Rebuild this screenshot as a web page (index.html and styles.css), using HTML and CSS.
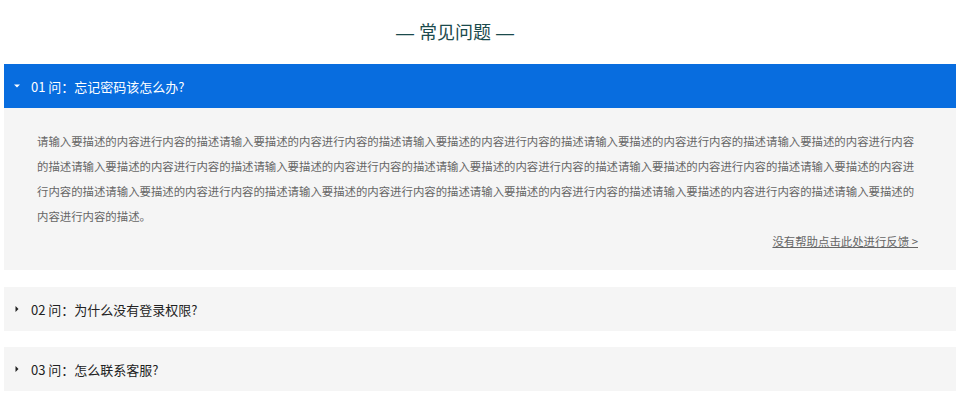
FILE: index.html
```html
<!DOCTYPE html>
<html lang="zh-CN">
<head>
    <meta charset="UTF-8">
    <meta name="viewport" content="width=device-width, initial-scale=1.0">
    <title>常见问题</title>
    <link rel="stylesheet" href="styles.css">
</head>
<body>
    <div class="faq">
        <h2 class="faq-title">— 常见问题 —</h2>

        <div class="faq-item open">
            <div class="faq-question">
                <svg class="caret" viewBox="0 0 6 6"><polygon points="0,1.5 6,1.5 3,4.5"/></svg>
                <span>01 问：忘记密码该怎么办?</span>
            </div>
            <div class="faq-answer">
                <p>请输入要描述的内容进行内容的描述请输入要描述的内容进行内容的描述请输入要描述的内容进行内容的描述请输入要描述的内容进行内容的描述请输入要描述的内容进行内容的描述请输入要描述的内容进行内容的描述请输入要描述的内容进行内容的描述请输入要描述的内容进行内容的描述请输入要描述的内容进行内容的描述请输入要描述的内容进行内容的描述请输入要描述的内容进行内容的描述请输入要描述的内容进行内容的描述请输入要描述的内容进行内容的描述请输入要描述的内容进行内容的描述请输入要描述的内容进行内容的描述。</p>
                <div class="feedback"><a href="#">没有帮助点击此处进行反馈 &gt;</a></div>
            </div>
        </div>

        <div class="faq-item">
            <div class="faq-question">
                <svg class="caret" viewBox="0 0 6 6"><polygon points="1.5,0 4.5,3 1.5,6"/></svg>
                <span>02 问：为什么没有登录权限?</span>
            </div>
        </div>

        <div class="faq-item">
            <div class="faq-question">
                <svg class="caret" viewBox="0 0 6 6"><polygon points="1.5,0 4.5,3 1.5,6"/></svg>
                <span>03 问：怎么联系客服?</span>
            </div>
        </div>
    </div>
</body>
</html>
```

FILE: styles.css
```css
:root {
    --blue: #086ddf;
    --panel: #f5f5f5;
    --title: #1b4a4c;
    --text: #222;
    --muted: #666;
}

* {
    margin: 0;
    padding: 0;
    box-sizing: border-box;
}

body {
    font-family: "Noto Sans CJK SC", "Liberation Sans", sans-serif;
    background: #fff;
    color: var(--text);
}

.faq {
    padding: 0 4px;
}

.faq-title {
    height: 64px;
    display: flex;
    align-items: center;
    justify-content: center;
    padding: 0 50px 2px 0;
    font-family: "Liberation Sans", "Noto Sans CJK SC", sans-serif;
    font-size: 18px;
    font-weight: normal;
    color: var(--title);
}

.faq-item {
    margin-bottom: 16px;
    background: var(--panel);
}

.faq-item.open {
    margin-bottom: 17px;
}

.faq-question {
    height: 44px;
    display: flex;
    align-items: center;
    padding-left: 10px;
    font-size: 13px;
    cursor: pointer;
}

.caret {
    width: 6px;
    height: 6px;
    margin-right: 11px;
    fill: #222;
}

.faq-item.open .faq-question {
    background: var(--blue);
    color: #fff;
}

.faq-item.open .caret {
    fill: #fff;
}

.faq-answer {
    padding: 21px 38px 16px 33px;
    font-size: 11.4px;
    line-height: 25px;
    color: var(--muted);
}

.feedback {
    text-align: right;
}

.feedback a {
    color: var(--muted);
    text-decoration: underline;
}
```
